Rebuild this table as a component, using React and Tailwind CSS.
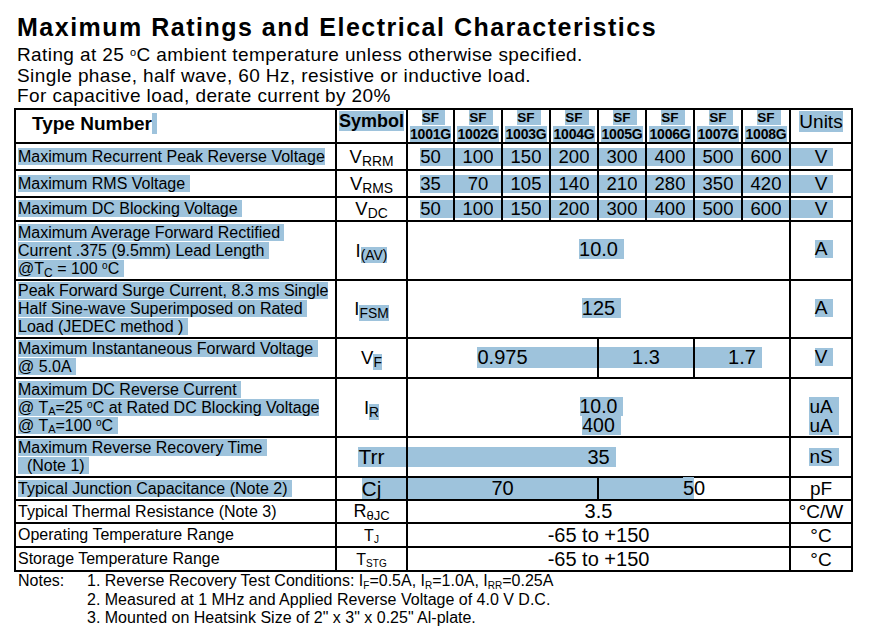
import React from 'react';

const HL = 'bg-[#9ec3dc]';
const B = 'border-2 border-black p-0';

const parts = ['1001G', '1002G', '1003G', '1004G', '1005G', '1006G', '1007G', '1008G'];

const voltRows = [
  { label: 'Maximum Recurrent Peak Reverse Voltage', sub: 'RRM', vals: ['50', '100', '150', '200', '300', '400', '500', '600'] },
  { label: 'Maximum RMS Voltage\u00a0', sub: 'RMS', vals: ['35', '70', '105', '140', '210', '280', '350', '420'] },
  { label: 'Maximum DC Blocking Voltage\u00a0', sub: 'DC', vals: ['50', '100', '150', '200', '300', '400', '500', '600'] },
];

// value laid out centred, with the selection band drawn on part of the cell
function Val({ mode = 'none', className = '', children }) {
  const l = mode === 'full' || mode === 'left' || mode === 'leftonly' ? HL : '';
  const r = mode === 'full' || mode === 'right' ? HL : '';
  const t = mode === 'none' || mode === 'leftonly' ? '' : HL;
  const trail = mode === 'left' || mode === 'text' ? ' pr-[6px] -mr-[6px]' : '';
  return (
    <div className={`grid grid-cols-[1fr_auto_1fr] ${className}`}>
      <span className={l} />
      <span className={`${t}${trail}`}>{children}</span>
      <span className={r} />
    </div>
  );
}

function Label({ lines, hl = true, className = '' }) {
  return (
    <td className={`${B} pl-[2px] text-[16px] leading-[18px] ${className}`}>
      {lines.map((l, i) => (
        <div key={i}>
          <span className={hl ? HL : ''}>{l}</span>
        </div>
      ))}
    </td>
  );
}

const deg = <sup className="text-[10px]">o</sup>;
const SYM = `${B} text-center text-[18.5px] leading-[18px]`;

export default function App() {
  return (
    <div className="w-[877px] h-[637px] overflow-hidden bg-white pl-[14px] text-black font-['Liberation_Sans',Arial,sans-serif]">
      <h1 className="ml-[3px] pt-[15px] text-[25px] leading-[25px] font-bold tracking-[1.5px]">
        Maximum Ratings and Electrical Characteristics
      </h1>
      <div className="ml-[3px] mt-[5px] text-[19px] leading-[20.5px] tracking-[0.4px]">
        <p>
          Rating at 25 <sup className="text-[11px]">o</sup>C ambient temperature unless otherwise specified.
        </p>
        <p>Single phase, half wave, 60 Hz, resistive or inductive load.</p>
        <p>For capacitive load, derate current by 20%</p>
      </div>

      <table className="mt-[1.5px] w-[839px] table-fixed border-collapse">
        <colgroup>
          <col className="w-[321px]" />
          <col className="w-[71px]" />
          <col className="w-[47px]" />
          <col className="w-[48px]" />
          <col className="w-[48px]" />
          <col className="w-[48px]" />
          <col className="w-[48px]" />
          <col className="w-[48px]" />
          <col className="w-[48px]" />
          <col className="w-[48px]" />
          <col className="w-[62px]" />
        </colgroup>
        <tbody>
          <tr className="h-[34px]">
            <td className={`${B} align-top pl-[16px] pt-[3px] text-[19px] leading-[21px] font-bold`}>
              Type Number<span className={HL}>{'\u00a0'}</span>
            </td>
            <td className={`${B} align-top text-center pt-[1px] text-[18px] leading-[21px] font-bold`}>
              <span className={HL}>Symbol</span>
            </td>
            {parts.map((p) => (
              <td key={p} className={`${B} align-top text-center leading-[16px] font-bold`}>
                <div className="text-[13.5px]">
                  <span className={`${HL} pr-[6px] -mr-[6px]`}>SF</span>
                </div>
                <div className="text-[14px] tracking-[-0.2px]">
                  <span className={HL}>{p}</span>
                </div>
              </td>
            ))}
            <td className={`${B} align-top text-center pt-[1px] text-[19px] leading-[21px]`}>
              <span className={HL}>Units</span>
            </td>
          </tr>

          {voltRows.map((row, ri) => (
            <tr key={row.sub} className={ri === 2 ? 'h-[24px]' : 'h-[27px]'}>
              <Label lines={[row.label]} />
              <td className={SYM}>
                V<sub>{row.sub}</sub>
              </td>
              {row.vals.map((v, i) => (
                <td key={i} className={B}>
                  <Val mode={i === 0 ? 'right' : 'full'} className="text-[18.5px] leading-[18px]">
                    {v}
                  </Val>
                </td>
              ))}
              <td className={B}>
                <Val mode="left" className="text-[19px] leading-[18px]">V</Val>
              </td>
            </tr>
          ))}

          <tr className="h-[59px]">
            <Label
              lines={[
                'Maximum Average Forward Rectified\u00a0',
                'Current .375 (9.5mm) Lead Length\u00a0',
                <>
                  @T<sub className="text-[12px]">C</sub> = 100 {deg}C{'\u00a0'}
                </>,
              ]}
            />
            <td className={SYM}>
              I<sub className={HL}>(AV)</sub>
            </td>
            <td colSpan={8} className={`${B} pb-[4px]`}>
              <Val mode="text" className="text-[20px] leading-[20px]">10.0</Val>
            </td>
            <td className={`${B} pb-[4px]`}>
              <Val mode="text" className="text-[19px] leading-[18px]">A</Val>
            </td>
          </tr>

          <tr className="h-[58px]">
            <Label
              lines={[
                'Peak Forward Surge Current, 8.3 ms Single',
                'Half Sine-wave Superimposed on Rated\u00a0',
                'Load (JEDEC method )\u00a0',
              ]}
            />
            <td className={SYM}>
              I<sub className={HL}>FSM</sub>
            </td>
            <td colSpan={8} className={`${B} pb-[3px]`}>
              <Val mode="text" className="text-[20px] leading-[20px]">125</Val>
            </td>
            <td className={`${B} pb-[3px]`}>
              <Val mode="text" className="text-[19px] leading-[18px]">A</Val>
            </td>
          </tr>

          <tr className="h-[40px]">
            <Label lines={['Maximum Instantaneous Forward Voltage\u00a0', '@ 5.0A\u00a0']} />
            <td className={SYM}>
              V<sub className={HL}>F</sub>
            </td>
            <td colSpan={4} className={`${B} pb-[2px]`}>
              <Val mode="right" className="text-[20px] leading-[21px]">0.975</Val>
            </td>
            <td colSpan={2} className={`${B} pb-[2px]`}>
              <Val mode="full" className="text-[20px] leading-[21px]">1.3</Val>
            </td>
            <td colSpan={2} className={`${B} pb-[2px]`}>
              <Val mode="left" className="text-[20px] leading-[21px]">1.7</Val>
            </td>
            <td className={`${B} pb-[2px]`}>
              <Val mode="text" className="text-[19px] leading-[18px]">V</Val>
            </td>
          </tr>

          <tr className="h-[59px]">
            <Label
              lines={[
                'Maximum DC Reverse Current\u00a0',
                <>
                  @ T<sub className="text-[11px]">A</sub>=25 {deg}C at Rated DC Blocking Voltage
                </>,
                <>
                  @ T<sub className="text-[11px]">A</sub>=100 {deg}C{'\u00a0'}
                </>,
              ]}
            />
            <td className={SYM}>
              I<sub className={HL}>R</sub>
            </td>
            <td colSpan={8} className={`${B} align-bottom pb-[1px]`}>
              <div className="flex flex-col items-center text-[19.5px] leading-[19px]">
                <span className={`${HL} pr-[6px] -mr-[6px]`}>10.0</span>
                <span className={`${HL} pr-[6px] -mr-[6px]`}>400</span>
              </div>
            </td>
            <td className={`${B} align-bottom pb-[1px]`}>
              <div className="flex justify-center text-[19px] leading-[19px]">
                <div className={`${HL} pr-[6px] -mr-[6px]`}>
                  uA
                  <br />
                  uA
                </div>
              </div>
            </td>
          </tr>

          <tr className="h-[40px]">
            <Label lines={['Maximum Reverse Recovery Time\u00a0', '\u00a0\u00a0(Note 1)\u00a0']} />
            <td className={B}>
              <Val mode="right" className="text-[21px] leading-[20px]">Trr</Val>
            </td>
            <td colSpan={8} className={B}>
              <Val mode="left" className="text-[20px] leading-[20px]">35</Val>
            </td>
            <td className={B}>
              <Val mode="text" className="text-[19px] leading-[18px]">nS</Val>
            </td>
          </tr>

          <tr className="h-[23px]">
            <Label lines={['Typical Junction Capacitance (Note 2)\u00a0']} />
            <td className={B}>
              <Val mode="right" className="text-[21px] leading-[21px]">Cj</Val>
            </td>
            <td colSpan={4} className={B}>
              <Val mode="full" className="text-[20px] leading-[21px]">70</Val>
            </td>
            <td colSpan={4} className={B}>
              <Val mode="leftonly" className="text-[20px] leading-[21px]">
                <span className={HL}>5</span>0
              </Val>
            </td>
            <td className={`${B} text-center text-[19px] leading-[21px]`}>pF</td>
          </tr>

          <tr className="h-[23px]">
            <Label hl={false} lines={['Typical Thermal Resistance (Note 3)']} />
            <td className={`${B} text-center text-[18px] leading-[21px]`}>
              R<sub className="text-[13px]">θJC</sub>
            </td>
            <td colSpan={8} className={`${B} text-center text-[20px] leading-[21px]`}>3.5</td>
            <td className={`${B} text-center text-[19px] leading-[21px]`}>°C/W</td>
          </tr>

          {['J', 'STG'].map((s) => (
            <tr key={s} className="h-[24px]">
              <Label hl={false} lines={[s === 'J' ? 'Operating Temperature Range' : 'Storage Temperature Range']} />
              <td className={`${B} text-center text-[16px] leading-[21px]`}>
                T<sub className="text-[10px]">{s}</sub>
              </td>
              <td colSpan={8} className={`${B} text-center text-[20px] leading-[21px]`}>-65 to +150</td>
              <td className={`${B} text-center text-[19px] leading-[21px]`}>°C</td>
            </tr>
          ))}
        </tbody>
      </table>

      <div className="ml-[4px] grid grid-cols-[69px_1fr] text-[16px] leading-[18.5px]">
        <div>Notes:</div>
        <div>
          <div>
            1. Reverse Recovery Test Conditions: I<sub className="text-[10px]">F</sub>=0.5A, I
            <sub className="text-[10px]">R</sub>=1.0A, I<sub className="text-[10px]">RR</sub>=0.25A
          </div>
          <div>2. Measured at 1 MHz and Applied Reverse Voltage of 4.0 V D.C.</div>
          <div>3. Mounted on Heatsink Size of 2" x 3" x 0.25" Al-plate.</div>
        </div>
      </div>
    </div>
  );
}
